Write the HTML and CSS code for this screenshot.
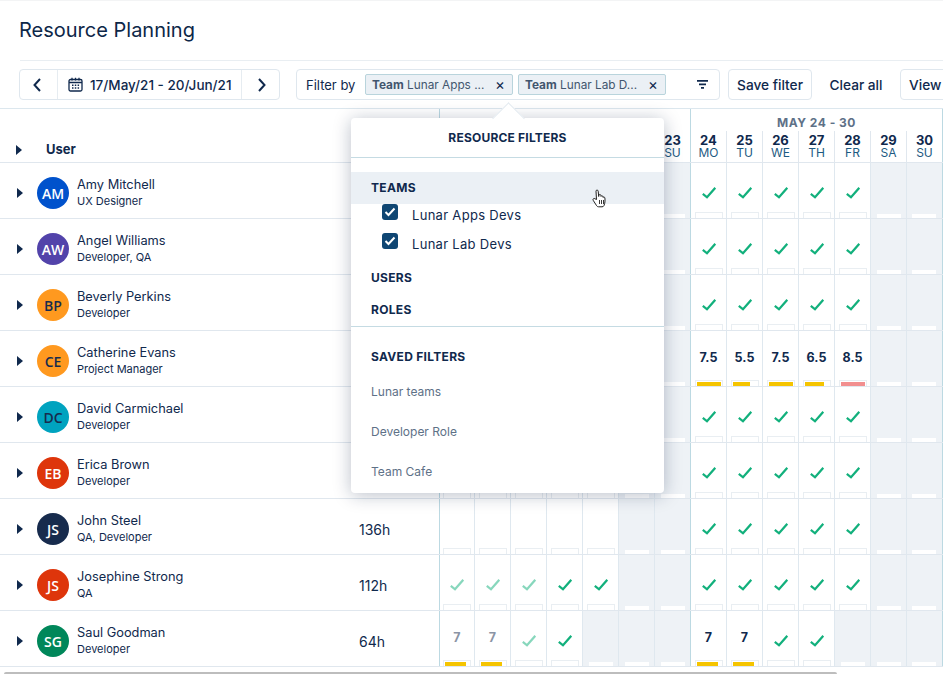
FILE: index.html
```html
<!DOCTYPE html>
<html lang="en">
<head>
    <meta charset="UTF-8">
    <meta name="viewport" content="width=device-width, initial-scale=1.0">
    <title>Resource Planning</title>
    <link rel="stylesheet" href="styles.css">
</head>
<body>
<div class="page">
    <header class="page-head">
        <h1>Resource Planning</h1>
    </header>

    <div class="toolbar">
        <div class="date-nav">
            <button class="nav-btn nav-prev" type="button">
                <svg width="10" height="16" viewBox="0 0 10 16"><path d="M8 2 2.500 8 8 14" fill="none" stroke="#10294d" stroke-width="2"/></svg>
            </button>
            <div class="date-range">
                <svg width="15" height="15" viewBox="0 0 15 15"><rect x="1" y="2.500" width="13" height="11.500" rx="1.500" fill="none" stroke="#10294d" stroke-width="1.300"/><path d="M1 5.500h13M4 .8v2.600M7.500 .8v2.600M11 .8v2.600" stroke="#10294d" stroke-width="1.300"/><path d="M4 7.500h1.500v1.500H4zM6.800 7.500h1.500v1.500H6.800zM9.600 7.500h1.500v1.500H9.600zM4 10.300h1.500v1.500H4zM6.800 10.300h1.500v1.500H6.800zM9.600 10.300h1.500v1.500H9.600z" fill="#10294d"/></svg>
                <span>17/May/21 - 20/Jun/21</span>
            </div>
            <button class="nav-btn nav-next" type="button">
                <svg width="10" height="16" viewBox="0 0 10 16"><path d="M2 2l5.500 6L2 14" fill="none" stroke="#10294d" stroke-width="2"/></svg>
            </button>
        </div>

        <div class="filter-box">
            <span class="filter-label">Filter by</span>
            <span class="chip"><span class="chip-text"><b>Team</b> Lunar Apps ...</span><span class="chip-x">&#215;</span></span>
            <span class="chip"><span class="chip-text"><b>Team</b> Lunar Lab D...</span><span class="chip-x">&#215;</span></span>
            <svg class="filter-icon" width="11" height="9" viewBox="0 0 11 9"><path d="M0 0h11v1.800H0zM2 3.500h7v1.800H2zM4 7h3v1.800H4z" fill="#10294d"/></svg>
        </div>

        <button class="btn btn-save" type="button">Save filter</button>
        <button class="btn-plain" type="button">Clear all</button>
        <button class="btn btn-view" type="button">View</button>
    </div>

    <div class="planner">
        <div class="head-row">
            <div class="user-col head-user"><span class="caret"></span><span>User</span></div>
            <div class="hours-col"></div>
            <div class="week week-a">
                <div class="week-title"></div>
                <div class="dates">
                    <div class="date"></div><div class="date"></div><div class="date"></div><div class="date"></div><div class="date"></div><div class="date"></div><div class="date"><b>23</b>SU</div>
                </div>
            </div>
            <div class="week week-b">
                <div class="week-title">MAY 24 - 30</div>
                <div class="dates">
                    <div class="date"><b>24</b>MO</div><div class="date"><b>25</b>TU</div><div class="date"><b>26</b>WE</div><div class="date"><b>27</b>TH</div><div class="date"><b>28</b>FR</div><div class="date"><b>29</b>SA</div><div class="date"><b>30</b>SU</div>
                </div>
            </div>
        </div>

        <div class="row">
            <div class="user-col"><span class="caret"></span><span class="avatar av-blue">AM</span><div class="who"><div class="name">Amy Mitchell</div><div class="role">UX Designer</div></div></div>
            <div class="hours-col"></div>
            <div class="day first narrow ok"></div><div class="day ok"></div><div class="day ok"></div><div class="day ok"></div><div class="day ok"></div><div class="day off"></div><div class="day off"></div>
            <div class="day first ok"></div><div class="day ok"></div><div class="day ok"></div><div class="day ok"></div><div class="day ok"></div><div class="day off"></div><div class="day off"></div>
        </div>
        <div class="row">
            <div class="user-col"><span class="caret"></span><span class="avatar av-purple">AW</span><div class="who"><div class="name">Angel Williams</div><div class="role">Developer, QA</div></div></div>
            <div class="hours-col"></div>
            <div class="day first narrow ok"></div><div class="day ok"></div><div class="day ok"></div><div class="day ok"></div><div class="day ok"></div><div class="day off"></div><div class="day off"></div>
            <div class="day first ok"></div><div class="day ok"></div><div class="day ok"></div><div class="day ok"></div><div class="day ok"></div><div class="day off"></div><div class="day off"></div>
        </div>
        <div class="row">
            <div class="user-col"><span class="caret"></span><span class="avatar av-orange">BP</span><div class="who"><div class="name">Beverly Perkins</div><div class="role">Developer</div></div></div>
            <div class="hours-col"></div>
            <div class="day first narrow ok"></div><div class="day ok"></div><div class="day ok"></div><div class="day ok"></div><div class="day ok"></div><div class="day off"></div><div class="day off"></div>
            <div class="day first ok"></div><div class="day ok"></div><div class="day ok"></div><div class="day ok"></div><div class="day ok"></div><div class="day off"></div><div class="day off"></div>
        </div>
        <div class="row">
            <div class="user-col"><span class="caret"></span><span class="avatar av-orange">CE</span><div class="who"><div class="name">Catherine Evans</div><div class="role">Project Manager</div></div></div>
            <div class="hours-col"></div>
            <div class="day first narrow ok"></div><div class="day ok"></div><div class="day ok"></div><div class="day ok"></div><div class="day ok"></div><div class="day off"></div><div class="day off"></div>
            <div class="day first"><b>7.5</b><i class="bar" style="width:24px"></i></div><div class="day"><b>5.5</b><i class="bar" style="width:17px"></i></div><div class="day"><b>7.5</b><i class="bar" style="width:24px"></i></div><div class="day"><b>6.5</b><i class="bar" style="width:19px"></i></div><div class="day"><b>8.5</b><i class="bar bar-over" style="width:24px"></i></div><div class="day off"></div><div class="day off"></div>
        </div>
        <div class="row">
            <div class="user-col"><span class="caret"></span><span class="avatar av-teal">DC</span><div class="who"><div class="name">David Carmichael</div><div class="role">Developer</div></div></div>
            <div class="hours-col"></div>
            <div class="day first narrow ok"></div><div class="day ok"></div><div class="day ok"></div><div class="day ok"></div><div class="day ok"></div><div class="day off"></div><div class="day off"></div>
            <div class="day first ok"></div><div class="day ok"></div><div class="day ok"></div><div class="day ok"></div><div class="day ok"></div><div class="day off"></div><div class="day off"></div>
        </div>
        <div class="row">
            <div class="user-col"><span class="caret"></span><span class="avatar av-red">EB</span><div class="who"><div class="name">Erica Brown</div><div class="role">Developer</div></div></div>
            <div class="hours-col"></div>
            <div class="day first narrow ok"></div><div class="day ok"></div><div class="day ok"></div><div class="day ok"></div><div class="day ok"></div><div class="day off"></div><div class="day off"></div>
            <div class="day first ok"></div><div class="day ok"></div><div class="day ok"></div><div class="day ok"></div><div class="day ok"></div><div class="day off"></div><div class="day off"></div>
        </div>
        <div class="row">
            <div class="user-col"><span class="caret"></span><span class="avatar av-navy">JS</span><div class="who"><div class="name">John Steel</div><div class="role">QA, Developer</div></div></div>
            <div class="hours-col">136h</div>
            <div class="day first narrow"></div><div class="day"></div><div class="day"></div><div class="day"></div><div class="day"></div><div class="day off"></div><div class="day off"></div>
            <div class="day first ok"></div><div class="day ok"></div><div class="day ok"></div><div class="day ok"></div><div class="day ok"></div><div class="day off"></div><div class="day off"></div>
        </div>
        <div class="row">
            <div class="user-col"><span class="caret"></span><span class="avatar av-red">JS</span><div class="who"><div class="name">Josephine Strong</div><div class="role">QA</div></div></div>
            <div class="hours-col">112h</div>
            <div class="day first narrow ok past"></div><div class="day ok past"></div><div class="day ok past"></div><div class="day ok"></div><div class="day ok"></div><div class="day off"></div><div class="day off"></div>
            <div class="day first ok"></div><div class="day ok"></div><div class="day ok"></div><div class="day ok"></div><div class="day ok"></div><div class="day off"></div><div class="day off"></div>
        </div>
        <div class="row">
            <div class="user-col"><span class="caret"></span><span class="avatar av-green">SG</span><div class="who"><div class="name">Saul Goodman</div><div class="role">Developer</div></div></div>
            <div class="hours-col">64h</div>
            <div class="day first narrow past"><b>7</b><i class="bar" style="width:21px"></i></div><div class="day past"><b>7</b><i class="bar" style="width:21px"></i></div><div class="day ok past"></div><div class="day ok"></div><div class="day off"></div><div class="day off"></div><div class="day off"></div>
            <div class="day first"><b>7</b><i class="bar" style="width:21px"></i></div><div class="day"><b>7</b><i class="bar" style="width:21px"></i></div><div class="day ok"></div><div class="day ok"></div><div class="day off"></div><div class="day off"></div><div class="day off"></div>
        </div>
    </div>

    <div class="scrollbar"></div>

    <div class="popup">
        <div class="popup-title">RESOURCE FILTERS</div>
        <div class="popup-group">
            <div class="group-head group-head-hover">TEAMS</div>
            <label class="check-row"><span class="checkbox"><svg width="12" height="10" viewBox="0 0 12 10"><path d="M1.500 5 4.500 8 10.500 1.500" fill="none" stroke="#fff" stroke-width="2"/></svg></span>Lunar Apps Devs</label>
            <label class="check-row"><span class="checkbox"><svg width="12" height="10" viewBox="0 0 12 10"><path d="M1.500 5 4.500 8 10.500 1.500" fill="none" stroke="#fff" stroke-width="2"/></svg></span>Lunar Lab Devs</label>
            <div class="group-head">USERS</div>
            <div class="group-head">ROLES</div>
        </div>
        <div class="saved">
            <div class="saved-title">SAVED FILTERS</div>
            <div class="saved-item">Lunar teams</div>
            <div class="saved-item">Developer Role</div>
            <div class="saved-item">Team Cafe</div>
        </div>
    </div>

    <svg class="hand" width="16" height="19" viewBox="0 0 16 19">
        <path d="M4.500 10.500 4 2.200C4 .6 6 .6 6.200 2.200l.5 5.300.2-1.200c.2-1.200 1.900-1.100 2 .2l.1.900c.3-1 1.800-.9 1.900.3l.1.800c.4-.8 1.800-.6 1.900.5.300 2.700.1 5.200-.9 7.500-.4.900-1 1.300-2 1.300H6.600c-.9 0-1.500-.4-2-1.100L1.200 11.300c-.8-1.200.8-2.500 1.800-1.500z" fill="#fff" stroke="#222" stroke-width="1"/>
        <path d="M7.500 11v4M9.500 11v4M11.500 11v4" stroke="#222" stroke-width=".9"/>
    </svg>
</div>
</body>
</html>
```

FILE: styles.css
```css
* {
    box-sizing: border-box;
}
body {
    margin: 0;
    font-family: Inter, "Liberation Sans", sans-serif;
    color: #10294d;
    background: #fff;
}
button {
    font-family: inherit;
    color: inherit;
    background: none;
    cursor: pointer;
}
.page {
    position: relative;
    width: 943px;
    height: 674px;
    overflow: hidden;
    border-top: 1px solid #f3f4f5;
}

/* title */
.page-head {
    height: 60px;
    margin-left: 20px;
    border-bottom: 1px solid #e9eef2;
}
h1 {
    margin: 0 0 0 -1px;
    padding-top: 17px;
    font-size: 20px;
    line-height: 24px;
    font-weight: 400;
    color: #0d2748;
}

/* toolbar */
.toolbar {
    display: flex;
    align-items: center;
    height: 31px;
    margin: 8px 0 8px 19px;
    white-space: nowrap;
}
.date-nav {
    display: flex;
    width: 261px;
    height: 31px;
    flex: none;
    border: 1px solid #dfe7ee;
    border-radius: 4px;
}
.nav-btn {
    display: flex;
    align-items: center;
    justify-content: center;
    width: 37px;
    padding: 0;
    border: 0;
}
.nav-prev {
    padding-right: 3px;
}
.nav-next {
    padding-left: 2px;
}
.date-range {
    display: flex;
    align-items: center;
    gap: 7px;
    flex: 1;
    padding-left: 10px;
    border: 1px solid #e6ecf1;
    border-width: 0 1px;
    font-size: 13.5px;
    font-weight: 500;
}
.filter-box {
    display: flex;
    align-items: center;
    width: 424px;
    height: 31px;
    margin-left: 16px;
    padding-left: 9px;
    flex: none;
    border: 1px solid #dfe7ee;
    border-radius: 4px;
}
.filter-label {
    width: 59px;
    font-size: 13px;
}
.chip {
    display: flex;
    align-items: center;
    justify-content: space-between;
    width: 148px;
    height: 21px;
    margin-right: 5px;
    padding: 0 7px 0 6px;
    border: 1px solid #b9d4dc;
    border-radius: 2px;
    background: #ebf0f5;
    font-size: 11.8px;
    color: #42566e;
}
.chip b {
    font-weight: 700;
}
.chip-x {
    font-size: 15px;
    line-height: 15px;
    color: #10294d;
}
.filter-icon {
    margin-left: 26px;
}
.btn {
    height: 31px;
    margin-left: 8px;
    padding: 0 8px;
    flex: none;
    border: 1px solid #dfe7ee;
    border-radius: 4px;
    font-size: 13.7px;
    font-weight: 500;
}
.btn-save {
    width: 84px;
}
.btn-plain {
    width: 54px;
    margin-left: 17px;
    padding: 0;
    flex: none;
    border: 0;
    font-size: 13.7px;
    font-weight: 500;
}
.btn-view {
    width: 70px;
    margin-left: 17px;
    text-align: left;
}

/* table */
.planner {
    width: 943px;
    border-top: 1px solid #dce7ee;
}
.head-row, .row {
    display: flex;
    width: 943px;
    overflow: hidden;
    border-bottom: 1px solid #e0e7ee;
}
.head-row {
    height: 54px;
}
.row {
    height: 56px;
}
.user-col {
    display: flex;
    align-items: center;
    width: 340px;
    flex: none;
    padding: 5px 0 0 17px;
}
.hours-col {
    display: flex;
    align-items: center;
    width: 99px;
    flex: none;
    padding: 5px 0 0 19px;
    font-size: 14px;
}
.head-user {
    align-items: flex-end;
    padding: 0 0 5px 16px;
    font-size: 13px;
    font-weight: 700;
}
.head-user .caret {
    margin: 0 24px 2px 0;
}
.caret {
    width: 0;
    height: 0;
    flex: none;
    margin-right: 14px;
    border-style: solid;
    border-width: 5px 0 5px 6px;
    border-color: transparent transparent transparent #10294d;
}
.avatar {
    display: flex;
    align-items: center;
    justify-content: center;
    width: 32px;
    height: 32px;
    margin-right: 8px;
    flex: none;
    border-radius: 50%;
    font-family: "Open Sans", sans-serif;
    font-size: 14px;
    font-weight: 600;
    color: #fff;
}
.av-blue { background: #0052cc; }
.av-purple { background: #5243aa; }
.av-orange { background: #ff991f; color: #172b4d; }
.av-teal { background: #00a3bf; color: #172b4d; }
.av-red { background: #de350b; }
.av-navy { background: #172b4d; }
.av-green { background: #00875a; }
.name {
    font-size: 12.8px;
    line-height: 16px;
}
.role {
    font-size: 11px;
    line-height: 16px;
}

/* week headers: the first day of the first week is 1px narrower */
.week {
    flex: none;
    border-left: 1px solid #bcd9e2;
}
.week-a {
    width: 251px;
}
.week-b {
    width: 253px;
    border-right: 1px solid #bcd9e2;
}
.week-title {
    height: 22px;
    padding-top: 6px;
    text-align: center;
    font-size: 12px;
    line-height: 15px;
    font-weight: 700;
    letter-spacing: .5px;
    color: #5e7187;
}
.dates {
    display: flex;
    height: 31px;
}
.date {
    width: 36px;
    flex: none;
    padding-top: 3px;
    border-left: 1px solid #e0e7ee;
    text-align: center;
    font-size: 12px;
    line-height: 12px;
    color: #1d5a82;
}
.date:first-child {
    width: 35px;
    border-left: 0;
}
.week-a .date:first-child {
    width: 34px;
}
.date b {
    display: block;
    font-size: 13px;
    line-height: 13px;
    color: #10294d;
}

.day {
    position: relative;
    display: flex;
    flex-direction: column;
    align-items: center;
    width: 36px;
    flex: none;
    border-left: 1px solid #dfe8ef;
}
.day.first {
    border-left-color: #bcd9e2;
}
.day.narrow {
    width: 35px;
}
.day:last-child {
    width: 37px;
    padding-right: 1px;
    border-right: 1px solid #bcd9e2;
}
.day::after {
    content: "";
    width: 26px;
    height: 5px;
    margin-top: auto;
    border: 1px solid #e9eef2;
    border-bottom: 0;
}
.day.off {
    background: #eef2f6;
}
.day.off::after {
    width: 24px;
    height: 4px;
    border: 0;
    background: #fff;
}
.day.ok::before {
    content: "";
    width: 14px;
    height: 12px;
    margin-top: 24px;
    background: url("data:image/svg+xml,%3Csvg xmlns='http://www.w3.org/2000/svg' width='14' height='12' viewBox='0 0 14 12'%3E%3Cpath d='M.8 6.800 5 10.300 13.300 .8' fill='none' stroke='%2312b07c' stroke-width='2.200'/%3E%3C/svg%3E") no-repeat;
}
.day.past::before {
    opacity: .5;
}
.day b {
    margin-top: 20px;
    font-size: 12.500px;
    line-height: 14px;
    font-weight: 700;
}
.day.past b {
    color: #8b94a5;
}
.bar {
    position: absolute;
    left: 6px;
    bottom: 0;
    height: 4px;
    background: #f5c400;
}
.narrow .bar {
    left: 5px;
}
.bar-over {
    background: #f28f8f;
}

.scrollbar {
    position: absolute;
    left: 4px;
    bottom: 0;
    width: 833px;
    height: 2px;
    border-radius: 2px 2px 0 0;
    background: #bdbdbd;
}

/* filter popup */
.popup {
    position: absolute;
    left: 351px;
    top: 117px;
    width: 313px;
    height: 375px;
    border-radius: 4px;
    background: #fff;
    box-shadow: 0 2px 18px rgba(9, 30, 66, .28);
}
.popup::before {
    content: "";
    position: absolute;
    left: 146px;
    top: -11px;
    width: 22px;
    height: 22px;
    transform: rotate(45deg);
    border: 1px solid #e4ebf0;
    border-width: 1px 0 0 1px;
    background: #fff;
}
.popup-title {
    position: relative;
    height: 40px;
    border-bottom: 1px solid #c5dbe3;
    text-align: center;
    font-size: 12px;
    line-height: 40px;
    font-weight: 700;
    letter-spacing: .2px;
}
.popup-group {
    padding-top: 14px;
    height: 169px;
    border-bottom: 1px solid #c5dbe3;
}
.group-head {
    height: 32px;
    padding-left: 20px;
    font-size: 12px;
    line-height: 32px;
    font-weight: 700;
    letter-spacing: .3px;
}
.group-head-hover {
    background: #ebf0f5;
}
.check-row {
    display: flex;
    height: 29px;
    padding-left: 31px;
    font-size: 13px;
    line-height: 22px;
    letter-spacing: .3px;
}
.checkbox {
    display: flex;
    align-items: center;
    justify-content: center;
    width: 16px;
    height: 16px;
    margin-right: 14px;
    border-radius: 3px;
    background: #0f4673;
}
.saved-title {
    padding: 21px 0 6px 20px;
    font-size: 12px;
    line-height: 18px;
    font-weight: 700;
    letter-spacing: .3px;
}
.saved-item {
    height: 40px;
    padding-left: 20px;
    font-size: 12px;
    line-height: 40px;
    color: #5e7187;
}
.hand {
    position: absolute;
    left: 592px;
    top: 188px;
}
```
